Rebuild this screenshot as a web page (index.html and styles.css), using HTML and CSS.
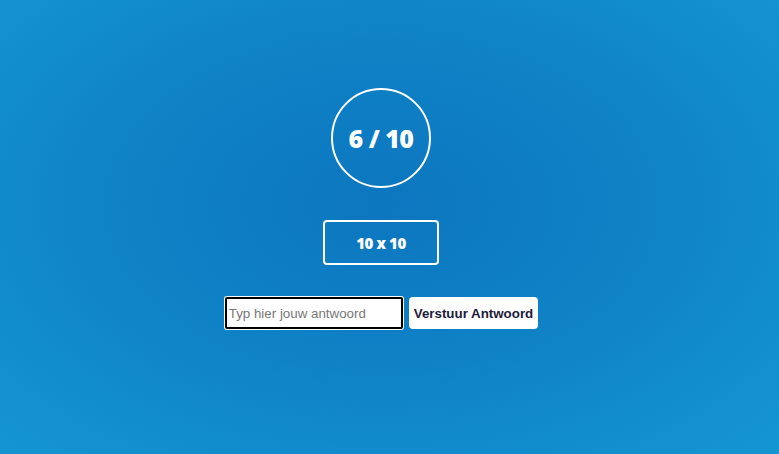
FILE: index.html
```html
<!DOCTYPE html>
<html lang="nl">
<head>
<meta charset="utf-8">
<title>Tafels oefenen</title>
<link rel="stylesheet" href="styles.css">
</head>
<body>
<main class="quiz">
  <div class="score">6 / 10</div>
  <div class="question">10 x 10</div>
  <form class="answer-row" onsubmit="return false">
    <input class="answer-input" type="text" placeholder="Typ hier jouw antwoord" autofocus>
    <button class="submit-btn" type="submit">Verstuur Antwoord</button>
  </form>
</main>
</body>
</html>
```
FILE: styles.css
```css
html, body {
  margin: 0;
  height: 100%;
}
body {
  background: radial-gradient(ellipse at 49% 45%, #0c76bf 0%, #0f82c6 45%, #1496d1 100%);
  font-family: "Open Sans", "Noto Sans", sans-serif;
  color: #fff;
  padding-right: 17px;
  box-sizing: border-box;
}
.quiz {
  display: flex;
  flex-direction: column;
  align-items: center;
  padding-top: 88px;
}
.score {
  width: 100px;
  height: 100px;
  box-sizing: border-box;
  border: 2px solid #fff;
  border-radius: 50%;
  display: flex;
  align-items: center;
  justify-content: center;
  font-weight: 800;
  font-size: 25px;
  letter-spacing: -0.5px;
}
.question {
  margin-top: 32px;
  width: 116px;
  height: 45px;
  box-sizing: border-box;
  border: 2px solid #fff;
  border-radius: 4px;
  display: flex;
  align-items: center;
  justify-content: center;
  font-weight: 800;
  font-size: 15px;
  letter-spacing: -0.4px;
}
.answer-row {
  margin-top: 31px;
  display: flex;
  align-items: center;
  gap: 5px;
}
.answer-input {
  width: 180px;
  height: 34px;
  box-sizing: border-box;
  border: 2px solid #fff;
  outline: 2px solid #000;
  outline-offset: -3px;
  border-radius: 3px;
  background: #fff;
  padding: 0 3px;
  font-family: "Liberation Sans", Arial, sans-serif;
  font-size: 13.33px;
  color: #222;
}
.answer-input::placeholder {
  color: #777;
}
.submit-btn {
  height: 32px;
  padding: 0 5px;
  border: none;
  border-radius: 4px;
  background: #fff;
  color: #1b1b3a;
  font-family: "Liberation Sans", Arial, sans-serif;
  font-weight: 700;
  font-size: 13.33px;
  cursor: pointer;
}
```
